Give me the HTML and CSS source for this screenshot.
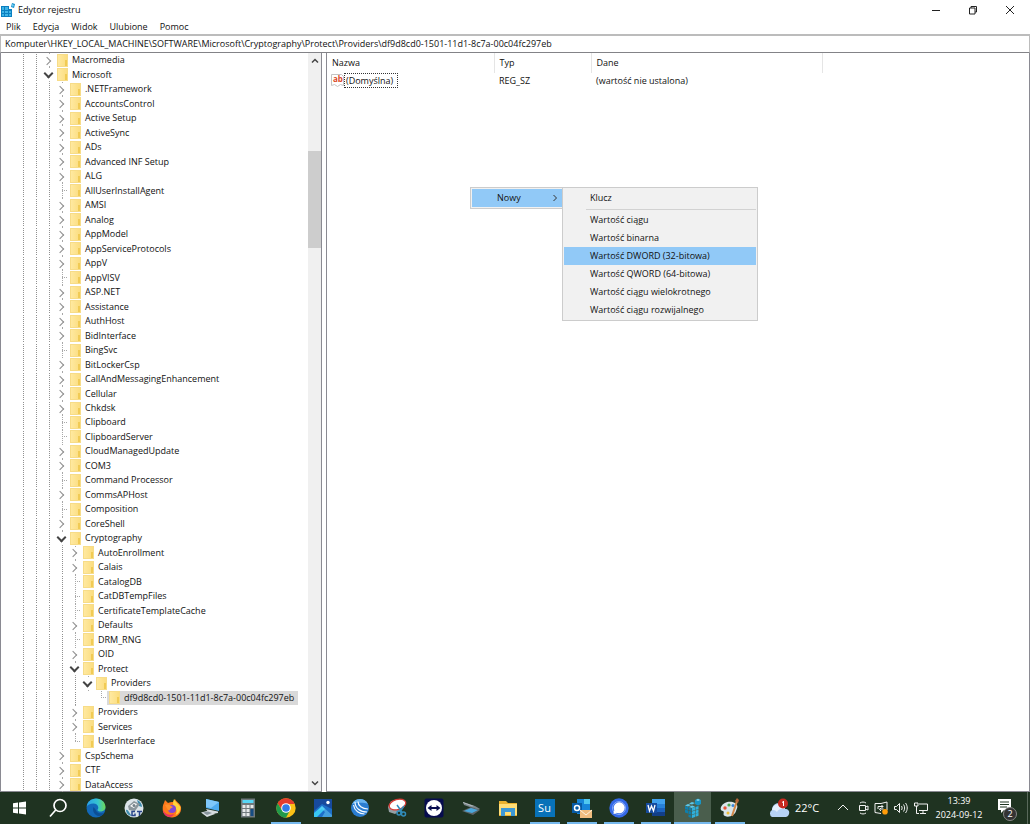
FILE: index.html
```html
<!DOCTYPE html>
<html lang="pl">
<head>
<meta charset="utf-8">
<title>Edytor rejestru</title>
<link rel="stylesheet" href="styles.css">
</head>
<body>
<header class="titlebar">
  <svg class="app-icon" viewBox="0 0 14 14" aria-hidden="true"><path fill="#0b7fc0" d="M0 3h11v11H0z"/><path fill="#3fb4e6" d="M1 4h2v3H1zM4 4h3v3H4zM1 8h2v2H1zM4 8h3v2H4zM8 8h2v2H8zM1 11h2v2H1zM4 11h3v2H4zM8 11h2v2H8z"/><path fill="#fff" d="M8 2h3v4H8z"/><path fill="#168fcb" d="m11 0 3 1-1 4-3-1z"/><path fill="#6ed0f5" d="m11 1 2 1-1 2-1-1z"/></svg>
  <h1>Edytor rejestru</h1>
  <div class="window-buttons">
    <button aria-label="Minimalizuj"><svg viewBox="0 0 10 10"><path d="M1 5.500h8"/></svg></button>
    <button aria-label="Przywróć"><svg viewBox="0 0 10 10"><path d="M1.500 3h5.500v6h-5.500zM3 3V1.500h5.500V7H7"/></svg></button>
    <button aria-label="Zamknij"><svg viewBox="0 0 10 10"><path d="m1 1 8 8M9 1 1 9"/></svg></button>
  </div>
</header>
<nav class="menubar">
  <button>Plik</button><button>Edycja</button><button>Widok</button><button>Ulubione</button><button>Pomoc</button>
</nav>
<input class="address" aria-label="Adres" value="Komputer\HKEY_LOCAL_MACHINE\SOFTWARE\Microsoft\Cryptography\Protect\Providers\df9d8cd0-1501-11d1-8c7a-00c04fc297eb">
<main class="panes">
  <section class="tree-pane">
    <ul class="tree">
      <li class="l3"><button class="tg" aria-label="Rozwiń"></button><i></i><span>Macromedia</span></li>
      <li class="l3"><button class="tg open" aria-label="Zwiń"></button><i></i><span>Microsoft</span></li>
      <li class="l4"><button class="tg" aria-label="Rozwiń"></button><i></i><span>.NETFramework</span></li>
      <li class="l4"><button class="tg" aria-label="Rozwiń"></button><i></i><span>AccountsControl</span></li>
      <li class="l4"><button class="tg" aria-label="Rozwiń"></button><i></i><span>Active Setup</span></li>
      <li class="l4"><button class="tg" aria-label="Rozwiń"></button><i></i><span>ActiveSync</span></li>
      <li class="l4"><button class="tg" aria-label="Rozwiń"></button><i></i><span>ADs</span></li>
      <li class="l4"><button class="tg" aria-label="Rozwiń"></button><i></i><span>Advanced INF Setup</span></li>
      <li class="l4"><button class="tg" aria-label="Rozwiń"></button><i></i><span>ALG</span></li>
      <li class="l4"><b class="leaf"></b><i></i><span>AllUserInstallAgent</span></li>
      <li class="l4"><button class="tg" aria-label="Rozwiń"></button><i></i><span>AMSI</span></li>
      <li class="l4"><button class="tg" aria-label="Rozwiń"></button><i></i><span>Analog</span></li>
      <li class="l4"><button class="tg" aria-label="Rozwiń"></button><i></i><span>AppModel</span></li>
      <li class="l4"><button class="tg" aria-label="Rozwiń"></button><i></i><span>AppServiceProtocols</span></li>
      <li class="l4"><button class="tg" aria-label="Rozwiń"></button><i></i><span>AppV</span></li>
      <li class="l4"><b class="leaf"></b><i></i><span>AppVISV</span></li>
      <li class="l4"><button class="tg" aria-label="Rozwiń"></button><i></i><span>ASP.NET</span></li>
      <li class="l4"><button class="tg" aria-label="Rozwiń"></button><i></i><span>Assistance</span></li>
      <li class="l4"><button class="tg" aria-label="Rozwiń"></button><i></i><span>AuthHost</span></li>
      <li class="l4"><button class="tg" aria-label="Rozwiń"></button><i></i><span>BidInterface</span></li>
      <li class="l4"><b class="leaf"></b><i></i><span>BingSvc</span></li>
      <li class="l4"><button class="tg" aria-label="Rozwiń"></button><i></i><span>BitLockerCsp</span></li>
      <li class="l4"><button class="tg" aria-label="Rozwiń"></button><i></i><span>CallAndMessagingEnhancement</span></li>
      <li class="l4"><button class="tg" aria-label="Rozwiń"></button><i></i><span>Cellular</span></li>
      <li class="l4"><button class="tg" aria-label="Rozwiń"></button><i></i><span>Chkdsk</span></li>
      <li class="l4"><b class="leaf"></b><i></i><span>Clipboard</span></li>
      <li class="l4"><b class="leaf"></b><i></i><span>ClipboardServer</span></li>
      <li class="l4"><button class="tg" aria-label="Rozwiń"></button><i></i><span>CloudManagedUpdate</span></li>
      <li class="l4"><button class="tg" aria-label="Rozwiń"></button><i></i><span>COM3</span></li>
      <li class="l4"><b class="leaf"></b><i></i><span>Command Processor</span></li>
      <li class="l4"><button class="tg" aria-label="Rozwiń"></button><i></i><span>CommsAPHost</span></li>
      <li class="l4"><b class="leaf"></b><i></i><span>Composition</span></li>
      <li class="l4"><button class="tg" aria-label="Rozwiń"></button><i></i><span>CoreShell</span></li>
      <li class="l4"><button class="tg open" aria-label="Zwiń"></button><i></i><span>Cryptography</span></li>
      <li class="l5"><button class="tg" aria-label="Rozwiń"></button><i></i><span>AutoEnrollment</span></li>
      <li class="l5"><button class="tg" aria-label="Rozwiń"></button><i></i><span>Calais</span></li>
      <li class="l5"><b class="leaf"></b><i></i><span>CatalogDB</span></li>
      <li class="l5"><b class="leaf"></b><i></i><span>CatDBTempFiles</span></li>
      <li class="l5"><b class="leaf"></b><i></i><span>CertificateTemplateCache</span></li>
      <li class="l5"><button class="tg" aria-label="Rozwiń"></button><i></i><span>Defaults</span></li>
      <li class="l5"><b class="leaf"></b><i></i><span>DRM_RNG</span></li>
      <li class="l5"><button class="tg" aria-label="Rozwiń"></button><i></i><span>OID</span></li>
      <li class="l5"><button class="tg open" aria-label="Zwiń"></button><i></i><span>Protect</span></li>
      <li class="l6"><button class="tg open" aria-label="Zwiń"></button><i></i><span>Providers</span></li>
      <li class="l7"><b class="leaf last"></b><div class="selected"><i></i><span>df9d8cd0-1501-11d1-8c7a-00c04fc297eb</span></div></li>
      <li class="l5"><button class="tg" aria-label="Rozwiń"></button><i></i><span>Providers</span></li>
      <li class="l5"><button class="tg" aria-label="Rozwiń"></button><i></i><span>Services</span></li>
      <li class="l5"><b class="leaf last"></b><i></i><span>UserInterface</span></li>
      <li class="l4"><button class="tg" aria-label="Rozwiń"></button><i></i><span>CspSchema</span></li>
      <li class="l4"><button class="tg" aria-label="Rozwiń"></button><i></i><span>CTF</span></li>
      <li class="l4"><button class="tg" aria-label="Rozwiń"></button><i></i><span>DataAccess</span></li>
    </ul>
    <div class="scrollbar">
      <button aria-label="W górę"><svg viewBox="0 0 8 8"><path d="M1 5.500 4 2.500l3 3"/></svg></button>
      <div class="track"><div class="thumb"></div></div>
      <button aria-label="W dół"><svg viewBox="0 0 8 8"><path d="m1 2.500 3 3 3-3"/></svg></button>
    </div>
  </section>
  <section class="values-pane">
    <table class="values">
      <colgroup><col class="c-name"><col class="c-type"><col class="c-data"><col></colgroup>
      <thead><tr><th>Nazwa</th><th>Typ</th><th>Dane</th><td></td></tr></thead>
      <tbody><tr>
        <td><div class="value-name"><svg viewBox="0 0 13 13" aria-hidden="true"><path fill="#fff" stroke="#c4c4c4" d="M.5.5h10l2 2v9l-3-1-3 2-3-2-3 1z"/><text x="2" y="8">ab</text></svg><span>(Domyślna)</span></div></td>
        <td>REG_SZ</td><td>(wartość nie ustalona)</td><td></td>
      </tr></tbody>
    </table>
  </section>
</main>
<div class="context">
  <div class="menu parent"><button class="hot">Nowy<svg viewBox="0 0 6 8" aria-hidden="true"><path d="m1.500 1 3 3-3 3"/></svg></button></div>
  <div class="menu sub">
    <button>Klucz</button>
    <hr>
    <button>Wartość ciągu</button>
    <button>Wartość binarna</button>
    <button class="hot">Wartość DWORD (32-bitowa)</button>
    <button>Wartość QWORD (64-bitowa)</button>
    <button>Wartość ciągu wielokrotnego</button>
    <button>Wartość ciągu rozwijalnego</button>
  </div>
</div>
<footer class="taskbar">
  <div class="apps">
    <button aria-label="Start"><svg viewBox="0 0 20 20"><path fill="#fff" d="M3 5.300l5-.7V9.600H3zM9 4.500l7-1v6.100h-7zM3 10.500h5v5l-5-.7zM9 10.500h7v6.100l-7-1z"/></svg></button>
    <button aria-label="Szukaj"><svg viewBox="0 0 20 20"><g fill="none" stroke="#fff" stroke-width="1.700"><circle cx="12" cy="7.500" r="6"/><path d="M7.700 12 2 18.500"/></g></svg></button>
    <button aria-label="Edge"><svg viewBox="0 0 20 20"><defs><linearGradient id="eg"><stop stop-color="#2a9fe8"/><stop offset=".6" stop-color="#36c5cf"/><stop offset="1" stop-color="#6fdb55"/></linearGradient></defs><circle cx="10" cy="10" r="9.500" fill="#1268b8"/><path fill="url(#eg)" d="M.6 9C1 4 5 .5 10 .5c6 0 9.500 4.500 9.500 8.500 0 3-2.500 4.500-5 4.500-2 0-3-.7-3-1.500 0-.6.800-1 .800-2.500C12 7 10 5.500 7.500 5.500 4 5.500 1.500 7 .6 9z"/><path fill="#0c4f95" d="M7.500 9c-1.500 4 1 8.500 5.500 9 2.500 0 4.500-1.500 5.500-3.200-3 1.200-8 .7-9-3.300z"/></svg></button>
    <button aria-label="Narzędzie dyskowe"><svg viewBox="0 0 20 20"><circle cx="10" cy="10" r="9.500" fill="#dce4e9"/><path fill="#3e8cae" d="M2 12c2-1 3 3 6 6-3 0-6-3-6-6zM13 2c3 1 5 4 5 7l-3-1z"/><path fill="#8b969c" d="m4 8 6-5 6 3-5 7-6-1z"/><path fill="#fff" d="m6 8 4-3 3 1-3 4z"/><circle cx="10" cy="7.500" r="1.500" fill="#727f87"/><path fill="none" stroke="#29468b" stroke-width="1.500" d="M11 13.500H8v4h3v-2M13 13.500h5M15.500 13.500v4.500"/></svg></button>
    <button aria-label="Firefox"><svg viewBox="0 0 20 20"><path fill="#ff7a1c" d="M2 5 3 2l3 3c2-1 3-1 5-1l2-3c1 3 5 4 6 8 1 6-4 10.500-9 10.500S.5 16 .7 11C.7 8 1 7 2 5z"/><path fill="#ffd33b" d="M12 1c1 3 5 5 6.500 8 0 4-2 7-5 8 2-4 1-7-2-9-1-3 0-5 .500-7z"/><path fill="#e93168" d="M1 12c2 4 6 6 11 4-1 2-3 3.500-5 3C3 18 1 15 1 12z"/><circle cx="10" cy="11" r="4" fill="#8147d5"/><path fill="#ff922c" d="M3 7c3-1 5 0 6 1l2 1c-1 1-2 1-3 2 0 1-1 2-2 1z"/></svg></button>
    <button aria-label="Komputer"><svg viewBox="0 0 20 20"><path fill="#4dabf0" d="m6 1 13 3v9L6 10z"/><path fill="#7fc8fb" d="m6 1 13 3-8 6-5-1z"/><path fill="#d6dcdf" d="m6 11 12 2.500v1.500l-6 1-4-2zM1 14.500l8-2 6 3.500-8 3z"/><path fill="#88959d" d="m3 14.500 5-1 4 1.500-5 2z"/></svg></button>
    <button aria-label="Kalkulator"><svg viewBox="0 0 20 20"><path fill="#70797d" d="M3 .5h14v19H3z"/><path fill="#57d6f6" d="M4.500 2h11v3h-11z"/><path fill="#e6e9ea" d="M4.500 7h3v3h-3zM8.500 7h3v3h-3zM12.500 7h3v3h-3zM4.500 11h3v3h-3zM8.500 11h3v3h-3zM4.500 15h3v3h-3zM8.500 15h3v3h-3z"/><path fill="#164c83" d="M12.500 11h3v7h-3z"/></svg></button>
    <button class="running" aria-label="Chrome"><svg viewBox="0 0 20 20"><circle cx="10" cy="10" r="9.700" fill="#fbc116"/><path fill="#e33b2e" d="M1.600 5.150A9.700 9.700 0 0 1 18.400 5.150L18.500 6H10L6 12z"/><path fill="#219a4b" d="M1.600 5.150A9.700 9.700 0 0 0 10 19.700l4-7.500-8 0z"/><circle cx="10" cy="10" r="4.800" fill="#fff"/><circle cx="10" cy="10" r="3.800" fill="#317be8"/></svg></button>
    <button aria-label="Zdjęcia"><svg viewBox="0 0 20 20"><rect x="1" y="1" width="18" height="18" rx="1" fill="#1d6fc9"/><path fill="#174a9e" d="M1 1h18v10L9 6 1 13z"/><path fill="#39c7f2" d="m1 15 8-7 3 3-8 8H1z"/><path fill="#75d9f9" d="m9 8 10 9v2H9l3-5-3-3-4 2z" opacity=".45"/><circle cx="15" cy="4.500" r="1.700" fill="#fff"/></svg></button>
    <button aria-label="Przeglądarka"><svg viewBox="0 0 20 20"><circle cx="10" cy="10" r="9" fill="#2a7dd1"/><path fill="#68b4f1" d="M2 6a9 9 0 0 1 16 0c-6-2-10-1-16 0z"/><g fill="none" stroke="#f5faff" stroke-width="1.200"><path d="M5 4c0 6 5 10 12 10M8 3.500c0 4 4 7.500 10 7.500M3.500 7c1 6 6 9 11 9"/></g></svg></button>
    <button aria-label="Narzędzie Wycinanie"><svg viewBox="0 0 20 20"><path fill="#96a0a4" d="M1 9 4 3l14-1-2 9-8 5-6-2z"/><ellipse cx="10.500" cy="6.500" rx="8.500" ry="5" fill="#fff" stroke="#d73d38" stroke-width="1.300" transform="rotate(-16 10.500 6.500)"/><g fill="none" stroke="#318dbc" stroke-width="1.500"><path d="m10 7 5 7M17 8l-4 5"/><circle cx="12" cy="15" r="2"/><circle cx="16.500" cy="16" r="2"/></g></svg></button>
    <button aria-label="TeamViewer"><svg viewBox="0 0 20 20"><rect x=".5" y=".5" width="19" height="19" rx="2" fill="#070c4e"/><circle cx="10" cy="10" r="8" fill="#fff"/><path fill="#070c4e" d="m3.500 10 4-3v2h5V7l4 3-4 3v-2h-5v2z"/></svg></button>
    <button aria-label="Skaner"><svg viewBox="0 0 20 20"><path fill="#7b858a" d="m2 4 12 4 5 3-2 1L3 7z"/><path fill="#b0b8bb" d="m2 4 11 4-2 .500L2 5z"/><path fill="#5b6468" d="m1 13 9-4 9 3-7 5z"/><path fill="#4aa7dc" d="m3 13 7-3 7 2-6 3z"/></svg></button>
    <button aria-label="Eksplorator plików"><svg viewBox="0 0 20 20"><path fill="#eab12e" d="M1 3h7l2 2h9v13H1z"/><path fill="#ffdd76" d="M1 6h18v11H1z"/><path fill="#3c98d5" d="M3 10h14v8h-4v-4H7v4H3z"/></svg></button>
    <button class="running" aria-label="Su"><span class="su">Su</span></button>
    <button class="running" aria-label="Outlook"><svg viewBox="0 0 20 20"><path fill="#1685d9" d="M5 1h13v15H5z"/><path fill="#50c8ef" d="M12 1h6v5h-6z"/><path fill="#075ba6" d="M0 5h10v10H0z"/><circle cx="5" cy="10" r="2.500" fill="none" stroke="#fff" stroke-width="1.500"/><path fill="#f1bd7f" d="M8 12h12v8H8z"/><path fill="none" stroke="#fff3df" d="m8 12 6 5 6-5"/></svg></button>
    <button class="running" aria-label="Signal"><svg viewBox="0 0 20 20"><circle cx="10" cy="10" r="9.700" fill="#3469e8"/><circle cx="10" cy="10" r="6.500" fill="none" stroke="#86a9f5"/><circle cx="10.200" cy="9.800" r="5.500" fill="#fff"/><path fill="#fff" d="m5 12-.500 4 4-1z"/></svg></button>
    <button class="running" aria-label="Word"><svg viewBox="0 0 20 20"><path fill="#40a1ee" d="M6 1h13v5H6z"/><path fill="#2781d8" d="M6 6h13v4H6z"/><path fill="#1b62bd" d="M6 10h13v4H6z"/><path fill="#123f88" d="M6 14h13v4H6z"/><path fill="#164b9e" d="M0 5h11v10H0z"/><path fill="none" stroke="#fff" stroke-width="1.300" d="m2 7 1.500 6 2-5 2 5L9 7"/></svg></button>
    <button class="running active" aria-label="Edytor rejestru"><svg viewBox="0 0 20 20"><path fill="#0e7fae" d="M2 8l3 1v3l-3-1zM5.500 9l3 1v3l-3-1zM2 11.500l3 1v3l-3-1zM5.500 12.700l3 1v3l-3-1zM5.500 16.500l3 1V20l-3-1z"/><path fill="#2fb0dc" d="M9 10l3-1v3l-3 1zM12.500 9l3-1v3l-3 1zM9 13.500l3-1v3l-3 1zM12.500 12.500l3-1v3l-3 1zM9 17l3-1v3l-3 1zM12.500 15.800l3-1v3l-3 1z"/><path fill="#5cc8e8" d="M2 7.500l3-1.500 3 1-3 1.500zM6 5.500l3-1.500 3 1-3 1.500zM6 9l3-1.500 3 1L9 10z"/><path fill="#1994c4" d="m12 2 3-1.500 3 1.500v4l-3 1.500L12 6z"/><path fill="#8ad9ed" d="m13 2 2-1 2 1-2 1z"/></svg></button>
    <button class="running" aria-label="Paint"><svg viewBox="0 0 20 20"><path fill="#d9e5ea" d="M1 9c3-6 10-6 14-4 4 3 2 5 1 8-1 4-7 7-11 5-3-1 0-4-2-5-2 0-3-2-2-4z"/><circle cx="5" cy="10" r="1.700" fill="#e65338"/><circle cx="9" cy="7" r="1.600" fill="#49a950"/><circle cx="13" cy="7.500" r="1.500" fill="#3b87d9"/><circle cx="8" cy="15" r="1.500" fill="#edbd38"/><path stroke="#d18849" stroke-width="2" d="m17 3-5 15"/><path fill="#b6673a" d="m15 3 2-3 2 2-1 3z"/></svg></button>
  </div>
  <div class="tray">
    <button class="weather"><svg viewBox="0 0 22 20" aria-hidden="true"><path fill="#b7d3f6" d="M4 19a4 4 0 0 1 0-7c0-4 3-7 7-7s6 3 6 6c3 0 5 2 4 5-1 3-3 3-4 3z"/><path fill="#e5effd" d="M4 12c1-5 5-7 9-5 2 1 3 3 4 4-5-1-7 1-8 3-2-2-3-2-5-2z"/><circle cx="15" cy="5.500" r="5" fill="#c92a20"/><path stroke="#fff" d="M15.500 3v5M14 4.500l1.500-1"/></svg>22°C</button>
    <button class="chev" aria-label="Pokaż ukryte ikony"><svg viewBox="0 0 14 14"><path d="m2 9 5-5 5 5"/></svg></button>
    <button class="meet" aria-label="Kamera"><svg viewBox="0 0 14 14"><path d="M3.500 4.500h6v5h-6zM9.500 6l2.500-1v4L9.500 8M4 2c2-1.300 4-1.300 6 0M4 12c2 1.300 4 1.300 6 0"/></svg></button>
    <button class="update" aria-label="Aktualizacja"><svg viewBox="0 0 14 14"><path d="M1 2.500h6l6-1.500v8M1 2.500v9l6 1M4 8V5.500h5M7.500 4 9 5.500 7.500 7M9.500 8H5.500M7 7 5.500 8.500 7 10"/><circle cx="11" cy="10.800" r="2.800" class="dot"/></svg></button>
    <button class="volume" aria-label="Głośność"><svg viewBox="0 0 14 14"><path d="M.500 5.500H2.500l3-3v9l-3-3h-2zM7.500 5c.800 1.200.800 2.800 0 4M9.500 3.500c1.500 2 1.500 5 0 7M11.500 2c2.300 3 2.300 7 0 10"/></svg></button>
    <button class="network" aria-label="Sieć"><svg viewBox="0 0 14 14"><path d="M5 3h8.500v6.500H5M9 9.500V12M6 12.500h6M.500 2H4v3H.500zM2.500 5v7.500H5"/></svg></button>
    <button class="clock"><span>13:39</span><span>2024-09-12</span></button>
    <button class="notes" aria-label="Powiadomienia"><svg viewBox="0 0 20 20"><path fill="#fff" d="M1 1h13v11H7l-3 3v-3H1z"/><path stroke="#1f3321" d="M3 4h9M3 6.500h9M3 9h7"/></svg><span>2</span></button>
    <button class="peek" aria-label="Pokaż pulpit"></button>
  </div>
</footer>
</body>
</html>
```
FILE: styles.css
```css
* { box-sizing: border-box; }
body {
  margin: 0;
  height: 100vh;
  display: flex;
  flex-direction: column;
  overflow: hidden;
  position: relative;
  background: #fff;
  color: #111;
  font: 9px/14px "Open Sans", "Noto Sans", sans-serif;
}
button, input { font: inherit; color: inherit; border: 0; padding: 0; margin: 0; background: none; }
button { display: block; }
svg { display: block; }

.titlebar { display: flex; align-items: center; height: 19px; padding-left: 1px; gap: 3px; }
.app-icon { width: 14px; height: 14px; }
h1 { margin: 0; font-size: inherit; font-weight: 400; }
.window-buttons { margin-left: auto; padding-right: 2px; display: flex; }
.window-buttons button { width: 37px; height: 17px; display: grid; place-items: center; }
.window-buttons svg { width: 10px; height: 10px; fill: none; stroke: #222; }

.menubar { display: flex; gap: 12px; height: 15px; padding-left: 6px; align-items: center; }

.address {
  height: 19px;
  width: 100%;
  padding: 0 4px 2px;
  border: solid #bcbcbc;
  border-width: 2px 1px 1px;
  border-bottom-color: #838387;
  outline: 0;
}

.panes { flex: 1; min-height: 0; display: flex; gap: 4px; }
.tree-pane { flex: 0 0 322px; display: flex; border: 1px solid #8a8a92; border-top: 0; }
.tree {
  flex: 1;
  min-width: 0;
  margin: 0 0 -1px;
  padding: 0;
  list-style: none;
  display: grid;
  grid-auto-rows: minmax(0, 1fr);
  overflow: hidden;
}
.tree li {
  display: flex;
  align-items: center;
  background:
    repeating-linear-gradient(#fff 0 1px, transparent 1px 2px),
    repeating-linear-gradient(90deg, #909090 0 1px, transparent 1px 13px);
  background-position: 22px 0;
  background-repeat: no-repeat;
  background-size: var(--guides) 100%;
}
.l3 { padding-left: 41px; --guides: 14px; }
.l4 { padding-left: 54px; --guides: 27px; }
.l5 { padding-left: 67px; --guides: 40px; }
.l6 { padding-left: 80px; --guides: 53px; }
.l7 { padding-left: 93px; --guides: 53px; }
.tg, .leaf { flex: none; width: 13px; align-self: stretch; display: grid; place-items: center; }
.tg {
  background:
    linear-gradient(#a8a8a8, #a8a8a8) 7px 0 / 1px 1px no-repeat,
    linear-gradient(#a8a8a8, #a8a8a8) 7px 100% / 1px 1px no-repeat;
}
.tg::before {
  content: "";
  width: 5px;
  height: 5px;
  margin: 1px 3px 0 0;
  border: solid #8c8c8c;
  border-width: 1px 1px 0 0;
  transform: rotate(45deg);
}
.tg.open::before {
  width: 5px;
  height: 5px;
  margin: 0 0 2px;
  border-color: #444;
  border-width: 2px 2px 0 0;
  transform: rotate(135deg);
}
.leaf {
  background:
    repeating-linear-gradient(90deg, #a8a8a8 0 1px, transparent 1px 2px) 7px 50% / 6px 1px no-repeat,
    repeating-linear-gradient(#a8a8a8 0 1px, transparent 1px 2px) 7px 0 / 1px 100% no-repeat;
}
.leaf.last { background-size: 6px 1px, 1px 50%; }
.tree i {
  flex: none;
  width: 11px;
  height: 13px;
  margin: 0 4px 0 2px;
  background: linear-gradient(#f1cb55, #f1cb55) 100% 100% / 2px 6px no-repeat, linear-gradient(90deg, #ffe9a0, #fbdd80);
  border: 1px solid #f7dc88;
}
.selected { display: flex; align-items: center; background: #d9d9d9; padding-right: 4px; }
.tree span { white-space: nowrap; }

.scrollbar { flex: 0 0 13px; display: flex; flex-direction: column; background: #f0f0f0; }
.scrollbar button { height: 16px; display: grid; place-items: center; }
.scrollbar svg { width: 8px; height: 8px; fill: none; stroke: #444; stroke-width: 1.5; }
.track { flex: 1; display: flex; flex-direction: column; }
.track::before { content: ""; flex: 82 0 0; }
.thumb { flex: 97 0 0; background: #cdcdcd; }
.track::after { content: ""; flex: 527 0 0; }

.values-pane { flex: 1; min-width: 0; border: solid #8a8a92; border-width: 0 1px 1px; }
.values { width: 100%; table-layout: fixed; border-collapse: collapse; }
.c-name { width: 167px; }
.c-type { width: 97px; }
.c-data { width: 231px; }
.values th { text-align: left; font-weight: 400; height: 20px; padding: 0 5px; border-right: 1px solid #e5e5e5; }
.values td { padding: 0 5px; height: 15px; white-space: nowrap; }
.value-name { display: flex; align-items: center; margin-left: -1px; }
.value-name svg { width: 13px; height: 13px; }
.value-name text { font: 700 8px "Open Sans", sans-serif; fill: #dc4a27; }
.value-name span { border: 1px dotted #333; padding: 0 4px 0 1px; line-height: 13px; }

.context { position: absolute; left: 470px; top: 187px; display: flex; align-items: flex-start; }
.menu { background: #f1f1f1; border: 1px solid #ccc; padding: 1px; }
.menu button { width: 100%; height: 18px; text-align: left; padding-left: 26px; }
.menu .hot { background: #91c9f7; }
.parent { width: 92px; border-right: 0; padding-right: 0; }
.parent button { display: flex; align-items: center; justify-content: space-between; padding: 0 4px 0 25px; }
.parent svg { width: 6px; height: 8px; fill: none; stroke: #333; }
.sub { width: 196px; }
.menu hr { border: 0; border-top: 1px solid #d2d2d2; margin: 2px 0 1px 22px; }

.taskbar { height: 32px; flex: none; display: flex; background: #1f3321; color: #fff; }
.apps { flex: 1; display: grid; grid-template-columns: repeat(7, minmax(0, 38fr)) repeat(13, minmax(0, 37fr)); padding-left: 1px; }
.apps button { display: grid; place-items: center; background: no-repeat 50% 100% / 30px 2px; }
.apps svg { width: 20px; height: 20px; }
.apps .running { background-image: linear-gradient(#76b9ed, #76b9ed); }
.apps .active { background-color: #4a5e4d; background-size: 100% 2px; }
.su { width: 20px; height: 18px; background: #0872b8; font-size: 11px; line-height: 17px; text-align: center; }
.tray { flex: none; display: flex; }
.tray button { display: grid; place-items: center; }
.tray svg { width: 14px; height: 14px; fill: none; stroke: #f2f2f2; }
.tray .weather { display: flex; align-items: center; gap: 5px; width: 83px; padding-left: 20px; font-size: 11px; }
.weather svg { width: 22px; height: 20px; stroke: none; }
.tray .chev { width: 24px; }
.tray .meet { width: 16px; }
.tray .update, .tray .volume, .tray .network { width: 20px; }
.tray .dot { fill: #ff9d0a; stroke: none; }
.tray .clock { width: 56px; align-content: center; }
.tray .notes { width: 40px; position: relative; }
.notes svg { width: 20px; height: 20px; stroke: none; }
.notes span {
  position: absolute;
  right: 10px;
  bottom: 3px;
  width: 14px;
  height: 14px;
  border: 1px solid #888;
  border-radius: 50%;
  background: #333;
  line-height: 12px;
}
.tray .peek { width: 3px; border-left: 1px solid #59695b; }
```
